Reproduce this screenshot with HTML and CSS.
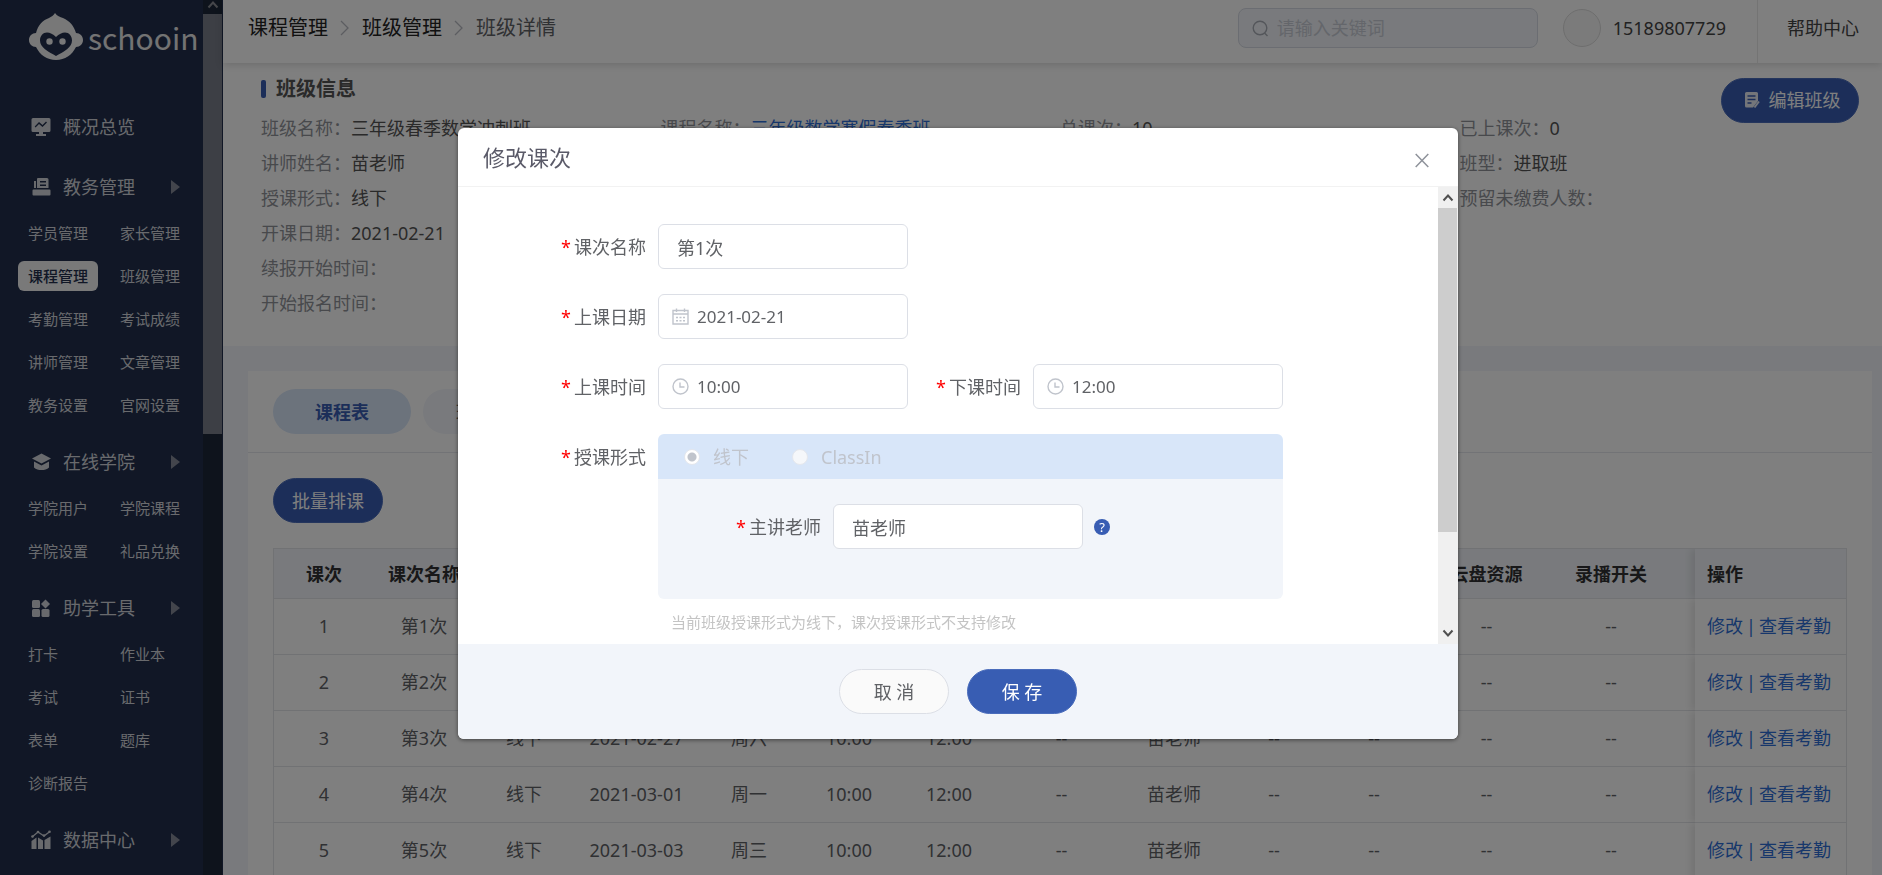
FILE: index.html
```html
<!DOCTYPE html>
<html lang="zh-CN">
<head>
<meta charset="utf-8">
<title>班级详情</title>
<link rel="stylesheet" href="styles.css">
</head>
<body>
<div class="app">
  <aside class="sidebar">
    <div class="side-content">
      <div class="logo">
        <svg width="54" height="47" viewBox="0 0 54 47" aria-hidden="true">
          <path fill="#f0f0f0" d="M26 0c2 3 5 4 8 5 7 3 11 8 13 15 4 0 7 3 7 7s-3 7-7 7c-4 8-11 13-20 13S11 42 7 34c-4 0-7-3-7-7s3-7 7-7C9 12 14 7 20 5c2-1 5-3 6-5z"/>
          <path fill="#222f4d" d="M27 24c3-3 6-4.500 9-4.500 4 0 7 3.500 7 8 0 7-8 11-16 15.500C19 38.500 11 34.500 11 27.500c0-4.500 3-8 7-8 3 0 6 1.500 9 4.500z"/>
          <circle cx="20.500" cy="28.500" r="3.200" fill="#f0f0f0"/><circle cx="33.500" cy="28.500" r="3.200" fill="#f0f0f0"/>
        </svg>
        <span class="logo-text">schooin</span>
      </div>
      <nav class="menu">
        <section class="menu-group">
          <a class="menu-head" href="#">
            <svg class="menu-icon" viewBox="0 0 20 20"><path fill="currentColor" fill-rule="evenodd" d="M2 1h16a1.500 1.500 0 0 1 1.500 1.500v11A1.500 1.500 0 0 1 18 15h-6v2h3v2H5v-2h3v-2H2A1.500 1.500 0 0 1 .5 13.500v-11A1.500 1.500 0 0 1 2 1zm2.500 9.500L8 7l3.500 3L16 5.500l-1-1-3.500 3.500L8 5 3.700 9.500z"/></svg>
            <span>概况总览</span>
          </a>
        </section>
        <section class="menu-group">
          <a class="menu-head" href="#">
            <svg class="menu-icon" viewBox="0 0 20 20"><path fill="currentColor" fill-rule="evenodd" d="M7 1h9a1.500 1.500 0 0 1 1.500 1.500V11H6V2a1 1 0 0 1 1-1zm2 3v1.500h6V4zm0 3.500V9h6V7.500zM3 4h2v7H3zM2.500 12.500h16a1 1 0 0 1 1 1v4a1 1 0 0 1-1 1h-16a1 1 0 0 1-1-1v-4a1 1 0 0 1 1-1z"/></svg>
            <span>教务管理</span><i class="caret"></i>
          </a>
          <div class="submenu">
            <a href="#">学员管理</a><a href="#">家长管理</a>
            <a class="active" href="#">课程管理</a><a href="#">班级管理</a>
            <a href="#">考勤管理</a><a href="#">考试成绩</a>
            <a href="#">讲师管理</a><a href="#">文章管理</a>
            <a href="#">教务设置</a><a href="#">官网设置</a>
          </div>
        </section>
        <section class="menu-group">
          <a class="menu-head" href="#">
            <svg class="menu-icon" viewBox="0 0 20 20"><path fill="currentColor" d="M10.500 1.500L20 6.500l-9.500 5-9.500-5zM3 9.500l7.500 4 7.500-4v6c-2 2-4.500 2.500-7.500 2.500S5 17.500 3 15.500z"/></svg>
            <span>在线学院</span><i class="caret"></i>
          </a>
          <div class="submenu">
            <a href="#">学院用户</a><a href="#">学院课程</a>
            <a href="#">学院设置</a><a href="#">礼品兑换</a>
          </div>
        </section>
        <section class="menu-group">
          <a class="menu-head" href="#">
            <svg class="menu-icon" viewBox="0 0 20 20"><g fill="currentColor"><rect x="1" y="2" width="8" height="8" rx="1.500"/><path d="M14.500 1.500l4.500 4.500-4.500 4.500L10 6z"/><rect x="1" y="11" width="8" height="8" rx="1.500"/><rect x="10.500" y="11" width="8" height="8" rx="1.500"/></g></svg>
            <span>助学工具</span><i class="caret"></i>
          </a>
          <div class="submenu">
            <a href="#">打卡</a><a href="#">作业本</a>
            <a href="#">考试</a><a href="#">证书</a>
            <a href="#">表单</a><a href="#">题库</a>
            <a href="#">诊断报告</a>
          </div>
        </section>
        <section class="menu-group">
          <a class="menu-head" href="#">
            <svg class="menu-icon" viewBox="0 0 20 20"><path fill="none" stroke="currentColor" stroke-width="1.400" d="M1 7l6-5 6 4 6-4.500"/><g fill="currentColor"><circle cx="1.500" cy="6.500" r="1.300"/><circle cx="7" cy="2" r="1.300"/><circle cx="13" cy="5.500" r="1.300"/><circle cx="18.500" cy="1.800" r="1.300"/><path d="M.5 11l5-3.500V19h-5zM7 7.500l5 3V19H7zM13.500 10l6-3.500V19h-6z"/></g></svg>
            <span>数据中心</span><i class="caret"></i>
          </a>
        </section>
      </nav>
    </div>
    <div class="side-scroll" aria-hidden="true">
      <div class="side-arrow"><svg width="12" height="9" viewBox="0 0 12 9"><path d="M1.500 7.500L6 2.500l4.500 5" fill="none" stroke="#8b8d94" stroke-width="2"/></svg></div>
      <div class="side-thumb"></div>
    </div>
  </aside>

  <div class="main">
    <header class="topbar">
      <nav class="crumbs">
        <a href="#">课程管理</a>
        <svg width="10" height="16" viewBox="0 0 10 16"><path d="M1 1l7 7-7 7" fill="none" stroke="#b8bbc2" stroke-width="1.300"/></svg>
        <a href="#">班级管理</a>
        <svg width="10" height="16" viewBox="0 0 10 16"><path d="M1 1l7 7-7 7" fill="none" stroke="#b8bbc2" stroke-width="1.300"/></svg>
        <span>班级详情</span>
      </nav>
      <label class="search">
        <svg width="17" height="17" viewBox="0 0 17 17"><circle cx="8" cy="8" r="6.800" fill="none" stroke="#a9adb6" stroke-width="1.400"/><path d="M12.500 13l3 3" stroke="#a9adb6" stroke-width="1.400"/></svg>
        <input type="search" placeholder="请输入关键词" aria-label="搜索">
      </label>
      <span class="avatar"></span>
      <span class="phone">15189807729</span>
      <a class="help" href="#">帮助中心</a>
    </header>

    <section class="info">
      <div class="info-head">
        <h2>班级信息</h2>
        <button class="btn primary edit" type="button">
          <svg width="16" height="18" viewBox="0 0 16 18"><path fill="#e8ecf5" d="M2.500 1h10A1.500 1.500 0 0 1 14 2.500V10l-5 6.500H2.500A1.500 1.500 0 0 1 1 15V2.500A1.500 1.500 0 0 1 2.500 1z"/><path d="M3.500 5h8M3.500 8.500h8M3.500 12h4" stroke="#385db3" stroke-width="1.300"/><path d="M15 10.500l-4.500 6" stroke="#e8ecf5" stroke-width="1.800"/></svg>
          编辑班级
        </button>
      </div>
      <dl class="info-grid">
        <div><dt>班级名称：</dt><dd>三年级春季数学冲刺班</dd></div>
        <div><dt>课程名称：</dt><dd><a href="#">三年级数学寒假春季班</a></dd></div>
        <div><dt>总课次：</dt><dd>10</dd></div>
        <div><dt>已上课次：</dt><dd>0</dd></div>
        <div><dt>讲师姓名：</dt><dd>苗老师</dd></div>
        <div></div><div></div>
        <div><dt>班型：</dt><dd>进取班</dd></div>
        <div><dt>授课形式：</dt><dd>线下</dd></div>
        <div></div><div></div>
        <div><dt>预留未缴费人数：</dt><dd></dd></div>
        <div class="row-start"><dt>开课日期：</dt><dd>2021-02-21</dd></div>
        <div class="row-start"><dt>续报开始时间：</dt><dd></dd></div>
        <div class="row-start"><dt>开始报名时间：</dt><dd></dd></div>
      </dl>
    </section>

    <section class="panel">
      <div class="tabs">
        <button class="tab current" type="button">课程表</button>
        <button class="tab" type="button">班级学员</button>
      </div>
      <div class="panel-body">
        <button class="btn primary" type="button">批量排课</button>
        <table class="lessons">
          <colgroup>
            <col class="w100"><col class="w100"><col class="w100"><col class="w125"><col class="w100"><col class="w100"><col class="w100"><col class="w125"><col class="w100"><col class="w100"><col class="w100"><col class="w125"><col><col class="w-op">
          </colgroup>
          <thead>
            <tr><th>课次</th><th>课次名称</th><th>形式</th><th>上课日期</th><th>星期</th><th>上课时间</th><th>下课时间</th><th>教室</th><th>讲师</th><th>助教</th><th>出勤</th><th>云盘资源</th><th class="last">录播开关</th><th class="op">操作</th></tr>
          </thead>
          <tbody>
            <tr><td>1</td><td>第1次</td><td></td><td></td><td></td><td></td><td></td><td></td><td></td><td></td><td></td><td>--</td><td class="last">--</td><td class="op"><a href="#">修改</a><b>|</b><a href="#">查看考勤</a></td></tr>
            <tr><td>2</td><td>第2次</td><td></td><td></td><td></td><td></td><td></td><td></td><td></td><td></td><td></td><td>--</td><td class="last">--</td><td class="op"><a href="#">修改</a><b>|</b><a href="#">查看考勤</a></td></tr>
            <tr><td>3</td><td>第3次</td><td>线下</td><td>2021-02-27</td><td>周六</td><td>10:00</td><td>12:00</td><td>--</td><td>苗老师</td><td>--</td><td>--</td><td>--</td><td class="last">--</td><td class="op"><a href="#">修改</a><b>|</b><a href="#">查看考勤</a></td></tr>
            <tr><td>4</td><td>第4次</td><td>线下</td><td>2021-03-01</td><td>周一</td><td>10:00</td><td>12:00</td><td>--</td><td>苗老师</td><td>--</td><td>--</td><td>--</td><td class="last">--</td><td class="op"><a href="#">修改</a><b>|</b><a href="#">查看考勤</a></td></tr>
            <tr><td>5</td><td>第5次</td><td>线下</td><td>2021-03-03</td><td>周三</td><td>10:00</td><td>12:00</td><td>--</td><td>苗老师</td><td>--</td><td>--</td><td>--</td><td class="last">--</td><td class="op"><a href="#">修改</a><b>|</b><a href="#">查看考勤</a></td></tr>
          </tbody>
        </table>
      </div>
    </section>
  </div>
</div>

<div class="overlay">
  <form class="dialog" role="dialog" aria-labelledby="dlg-title">
    <header class="dialog-head">
      <h1 id="dlg-title">修改课次</h1>
      <button class="close" type="button" aria-label="关闭"><svg width="14" height="15" viewBox="0 0 14 15"><path d="M.7 1l12.600 13M13.300 1L.7 14" stroke="#8f939b" stroke-width="1.500"/></svg></button>
    </header>
    <div class="dialog-body">
      <div class="fields">
        <div class="field">
          <label for="f-name">课次名称</label>
          <div class="box"><input id="f-name" type="text" value="第1次"></div>
        </div>
        <div class="field">
          <label for="f-date">上课日期</label>
          <div class="box">
            <svg width="17" height="17" viewBox="0 0 17 17" fill="none" stroke="#c0c4cc"><path stroke-width="1.400" d="M1 2.500h15v13.500H1zM1 6h15M4.500 .5v3.500M12.500 .5v3.500"/><path stroke-width="1.400" stroke-dasharray="2 1.500" d="M4 9.500h9.500M4 12.800h9.500"/></svg>
            <input id="f-date" type="text" value="2021-02-21">
          </div>
        </div>
        <div class="field">
          <label for="f-start">上课时间</label>
          <div class="box">
            <svg width="17" height="17" viewBox="0 0 17 17" fill="none" stroke="#c0c4cc" stroke-width="1.400"><circle cx="8.500" cy="8.500" r="7.500"/><path d="M8 4.500V9h4.500"/></svg>
            <input id="f-start" type="text" value="10:00">
          </div>
          <label class="second" for="f-end">下课时间</label>
          <div class="box">
            <svg width="17" height="17" viewBox="0 0 17 17" fill="none" stroke="#c0c4cc" stroke-width="1.400"><circle cx="8.500" cy="8.500" r="7.500"/><path d="M8 4.500V9h4.500"/></svg>
            <input id="f-end" type="text" value="12:00">
          </div>
        </div>
        <div class="field top">
          <span class="label" id="mode-label">授课形式</span>
          <div class="mode" role="radiogroup" aria-labelledby="mode-label">
            <div class="mode-head">
              <label class="radio"><input type="radio" name="mode" checked disabled>线下</label>
              <label class="radio"><input type="radio" name="mode" disabled>ClassIn</label>
            </div>
            <div class="mode-body">
              <label for="f-teacher">主讲老师</label>
              <div class="box"><input id="f-teacher" type="text" value="苗老师"></div>
              <button class="tip" type="button" aria-label="说明">?</button>
            </div>
            <p class="hint">当前班级授课形式为线下，课次授课形式不支持修改</p>
          </div>
        </div>
      </div>
      <div class="scroll" aria-hidden="true">
        <div class="scroll-arrow"><svg width="12" height="9" viewBox="0 0 12 9"><path d="M1.500 7.500L6 2.500l4.500 5" fill="none" stroke="#505050" stroke-width="2"/></svg></div>
        <div class="scroll-thumb"></div>
        <div class="scroll-arrow end"><svg width="12" height="9" viewBox="0 0 12 9"><path d="M1.500 1.500L6 6.500l4.500-5" fill="none" stroke="#505050" stroke-width="2"/></svg></div>
      </div>
    </div>
    <footer class="dialog-foot">
      <button class="btn plain" type="button">取 消</button>
      <button class="btn primary" type="submit">保 存</button>
    </footer>
  </form>
</div>
</body>
</html>
```

FILE: styles.css
```css
* { box-sizing: border-box; }
body {
  margin: 0;
  overflow: hidden;
  font: 18px/24px "Noto Sans", "Noto Sans CJK SC", sans-serif;
  color: #606266;
  background: #f2f5fa;
}
a { color: inherit; text-decoration: none; }
h1, h2, p, dl, dd { margin: 0; }
button, input { font: inherit; color: inherit; }
button { cursor: pointer; }
svg { flex: none; display: block; }

.app { display: flex; height: 100vh; overflow: hidden; }

/* Sidebar */
.sidebar {
  flex: none;
  display: flex;
  width: 223px;
  background: #222f4d;
  color: #d2d5db;
}
.side-content { flex: 1; overflow: hidden; }
.logo { display: flex; align-items: center; gap: 5px; padding: 13px 0 0 29px; height: 60px; }
.logo-text { font: 400 30px/40px "Noto Sans CJK SC", sans-serif; color: #e6e6e6; }
.menu { padding-top: 42px; }
.menu-group { padding-bottom: 10px; }
.menu-head { display: flex; align-items: center; height: 50px; padding: 0 23px 0 31px; }
.menu-icon { width: 20px; height: 20px; margin-right: 12px; }
.menu-head span { flex: 1; }
.caret { border: solid transparent; border-width: 7px 0 7px 9px; border-left-color: #868b98; }
.submenu {
  display: grid;
  grid-template-columns: 80px 80px;
  column-gap: 12px;
  grid-auto-rows: 43px;
  align-items: center;
  margin: -1px 0 11px;
  padding-left: 18px;
  font-size: 15px;
}
.submenu a { height: 30px; padding-left: 10px; line-height: 30px; white-space: nowrap; }
.submenu .active { background: #f2f2f2; color: #222f4d; border-radius: 6px; font-weight: 500; }
.menu-group:has(.submenu) { padding-bottom: 0; }
.side-scroll { flex: none; width: 20px; background: #1c2738; border-right: 1px solid #222f4d; }
.side-arrow { display: flex; justify-content: center; height: 14px; background: #1c2738; }
.side-thumb { height: 420px; background: #7a7e8a; }

/* Top bar */
.main { flex: 1; min-width: 0; display: flex; flex-direction: column; }
.topbar {
  flex: none;
  display: flex;
  align-items: center;
  height: 63px;
  padding-left: 25px;
  background: #fff;
  box-shadow: 0 2px 8px rgba(0, 0, 0, .15);
  z-index: 1;
}
.topbar > * { margin-bottom: 7px; }
.crumbs { display: flex; align-items: center; gap: 12px; margin-right: auto; font-size: 20px; }
.crumbs a { color: #222; }
.search {
  display: flex;
  align-items: center;
  gap: 8px;
  width: 300px;
  height: 40px;
  padding: 0 13px;
  background: #f2f5fa;
  border: 1px solid #d6dae4;
  border-radius: 8px;
}
.search input { flex: 1; min-width: 0; padding: 0; border: 0; background: none; outline: 0; }
.search input::placeholder { color: #c9cdd6; }
.avatar { width: 38px; height: 38px; margin-left: 25px; border: 1px solid #dcdcdc; border-radius: 50%; background: #f6f6f6; }
.phone { margin-left: 12px; color: #444; }
.topbar .help {
  margin: 0 0 0 31px;
  padding: 0 23px 7px 29px;
  border-left: 1px solid #e8e8e8;
  line-height: 56px;
  color: #444;
}

/* Class information */
.info { flex: none; padding: 15px 23px 26px 38px; background: #fff; }
.info-head { display: flex; justify-content: space-between; align-items: flex-start; height: 32px; }
.info h2 { display: flex; align-items: center; gap: 10px; font-size: 20px; line-height: 22px; color: #555; }
.info h2::before { content: ""; width: 5px; height: 18px; border-radius: 2px; background: #385db3; }
.info-grid { display: grid; grid-template-columns: repeat(4, 1fr); grid-auto-rows: 35px; align-items: center; }
.info-grid div { display: flex; white-space: nowrap; }
.info-grid .row-start { grid-column: 1; }
.info-grid dt { color: #909399; }
.info-grid dd { color: #555; }
.info-grid dd a { color: #2f6fd6; }

/* Buttons */
.btn {
  display: inline-flex;
  align-items: center;
  justify-content: center;
  height: 45px;
  min-width: 110px;
  padding: 0 18px;
  border: 1px solid;
  border-radius: 23px;
  white-space: nowrap;
}
.btn.primary { background: #385db3; border-color: #4a6cbb; color: #fff; }
.btn.plain { background: #fafafa; border-color: #dcdfe6; }
.btn.edit { gap: 9px; min-width: 138px; padding: 0 16px 2px 20px; }

/* Timetable */
.panel { flex: none; margin: 25px 10px 0 25px; background: #fff; }
.tabs { display: flex; gap: 12px; padding: 18px 25px; border-bottom: 1px solid #e4e7ed; }
.tab { width: 138px; height: 45px; padding: 0; border: 0; border-radius: 23px; background: #f2f5fa; }
.tab.current { background: #d8e6f9; color: #385db3; font-weight: 700; }
.panel-body { padding: 25px; }
.lessons {
  width: 100%;
  margin-top: 25px;
  table-layout: fixed;
  border-collapse: separate;
  border-spacing: 0;
  border: 1px solid #e2e4e9;
  border-bottom: 0;
  color: #606266;
}
.w100 { width: 100px; }
.w125 { width: 125px; }
.w-op { width: 151px; }
.lessons th, .lessons td { padding: 0; text-align: center; white-space: nowrap; border-bottom: 1px solid #e2e4e9; }
.lessons th { height: 50px; background: #f2f5fa; color: #303133; }
.lessons td { height: 56px; padding-bottom: 2px; }
.lessons .last { padding-right: 22px; }
.lessons .op { padding-left: 12px; text-align: left; box-shadow: -4px 0 8px rgba(0, 0, 0, .1); clip-path: inset(0 0 0 -10px); }
.lessons td.op { background: #fff; color: #2f6fd6; }
.lessons b { margin: 0 3px; font-weight: 400; }

/* Dialog */
.overlay {
  position: fixed;
  inset: 0;
  z-index: 10;
  display: flex;
  justify-content: center;
  align-items: flex-start;
  padding: 128px 0 0 34px;
  background: rgba(0, 0, 0, .5);
}
.dialog {
  width: 1000px;
  max-width: 100%;
  overflow: hidden;
  border-radius: 6px;
  background: #fff;
  box-shadow: 0 1px 4px rgba(0, 0, 0, .5);
}
.dialog-head { display: flex; align-items: center; justify-content: space-between; height: 59px; padding: 0 29px 0 25px; border-bottom: 1px solid #f2f2f2; }
.dialog-head h1 { font-size: 22px; font-weight: 400; color: #5a5a68; }
.close { padding: 0; border: 0; background: none; margin-top: 6px; }
.dialog-body { display: flex; }
.fields { flex: 1; display: flex; flex-direction: column; gap: 25px; padding: 37px 0 10px; }
.field { display: flex; align-items: center; }
.field.top { align-items: flex-start; }
.field > label, .field > .label, .mode-body > label {
  flex: none;
  width: 188px;
  margin-right: 12px;
  line-height: 46px;
  text-align: right;
}
.field > label::before, .field > .label::before, .mode-body > label::before { content: "*"; margin-right: 3px; color: #f00; }
.field > .second { width: 113px; }
.field > label, .mode-body > label { height: 45px; }
.box {
  display: flex;
  align-items: center;
  gap: 8px;
  width: 250px;
  height: 45px;
  padding: 0 13px;
  border: 1px solid #dcdfe6;
  border-radius: 6px;
  background: #fff;
}
.box input { flex: 1; min-width: 0; height: 40px; padding: 0; border: 0; outline: 0; background: none; }
.box input:first-child { padding-left: 5px; }
.box svg + input { font-size: 17px; }
.mode { width: 625px; }
.mode-head { display: flex; align-items: center; gap: 43px; height: 45px; padding-left: 26px; border-radius: 6px 6px 0 0; background: #d8e6f9; }
.radio { display: flex; align-items: center; gap: 13px; color: #c0c4cc; }
.radio input { appearance: none; width: 16px; height: 16px; margin: 0; border: 1px solid #e4e7ed; border-radius: 50%; background: #f5f7fa; }
.radio input:checked { background: radial-gradient(circle, #c0c4cc 4px, #fff 5px); }
.mode-body { display: flex; align-items: center; height: 120px; padding-bottom: 25px; border-radius: 0 0 6px 6px; background: #f2f5fa; }
.mode-body > label { width: 163px; }
.tip { width: 16px; height: 16px; margin-left: 11px; padding: 0; border: 0; border-radius: 50%; background: #385db3; color: #fff; font-size: 13px; line-height: 16px; }
.hint { padding: 11px 13px 0; font-size: 15px; color: #c4c4c4; }
.scroll { flex: none; display: flex; flex-direction: column; width: 20px; background: #f0f0f0; }
.scroll-arrow { display: flex; align-items: center; justify-content: center; height: 21px; }
.scroll-arrow.end { margin-top: auto; }
.scroll-thumb { height: 324px; margin-right: 1px; background: #cdcdcd; }
.dialog-foot { display: flex; align-items: center; justify-content: center; gap: 18px; height: 95px; background: #f2f5fa; }
```
